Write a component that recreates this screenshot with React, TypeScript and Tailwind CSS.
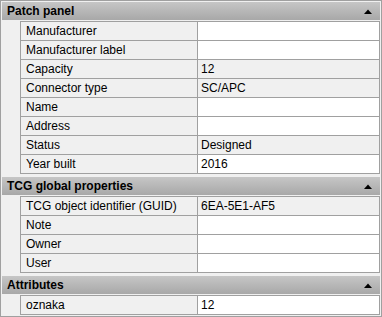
type Row = { label: string; value?: string; readOnly?: boolean };
type Section = { title: string; rows: Row[] };

const sections: Section[] = [
  {
    title: "Patch panel",
    rows: [
      { label: "Manufacturer" },
      { label: "Manufacturer label" },
      { label: "Capacity", value: "12", readOnly: true },
      { label: "Connector type", value: "SC/APC", readOnly: true },
      { label: "Name" },
      { label: "Address" },
      { label: "Status", value: "Designed", readOnly: true },
      { label: "Year built", value: "2016" },
    ],
  },
  {
    title: "TCG global properties",
    rows: [
      { label: "TCG object identifier (GUID)", value: "6EA-5E1-AF5", readOnly: true },
      { label: "Note" },
      { label: "Owner" },
      { label: "User" },
    ],
  },
  {
    title: "Attributes",
    rows: [{ label: "oznaka", value: "12" }],
  },
];

const CollapseArrow = () => (
  <svg width="8" height="5" viewBox="0 0 8 5" className="block">
    <path d="M0 5 L4 0.5 L8 5 Z" fill="#000" />
  </svg>
);

export default function App() {
  return (
    <div
      className="w-[382px] h-[317px] border border-[#a0a0a0] bg-[#f0f0f0] p-px text-[12px] text-black overflow-hidden"
      style={{ fontFamily: '"Liberation Sans", Arial, sans-serif' }}
    >
      {sections.map((section, i) => (
        <div key={section.title} className={i === 0 ? "" : "mt-[3px]"}>
          {/* group header */}
          <div className="h-[18px] flex items-center justify-between pl-[5px] pr-[8px] bg-gradient-to-b from-[#c6c6c6] to-[#a8a8a8]">
            <span className="font-bold leading-[18px]">{section.title}</span>
            <CollapseArrow />
          </div>

          {/* property rows */}
          <div className="mt-px ml-[18px] border-t border-l border-[#a0a0a0]">
            {section.rows.map((row) => (
              <div key={row.label} className="flex h-[19px] border-b border-[#a0a0a0]">
                <div className="w-[177px] shrink-0 border-r border-[#a0a0a0] pl-[5px] leading-[18px] whitespace-nowrap">
                  {row.label}
                </div>
                <div
                  className={
                    "flex-1 border-r border-[#a0a0a0] pl-[3px] leading-[18px] " +
                    (row.readOnly ? "bg-[#f0f0f0]" : "bg-white")
                  }
                >
                  {row.value}
                </div>
              </div>
            ))}
          </div>
        </div>
      ))}
    </div>
  );
}
